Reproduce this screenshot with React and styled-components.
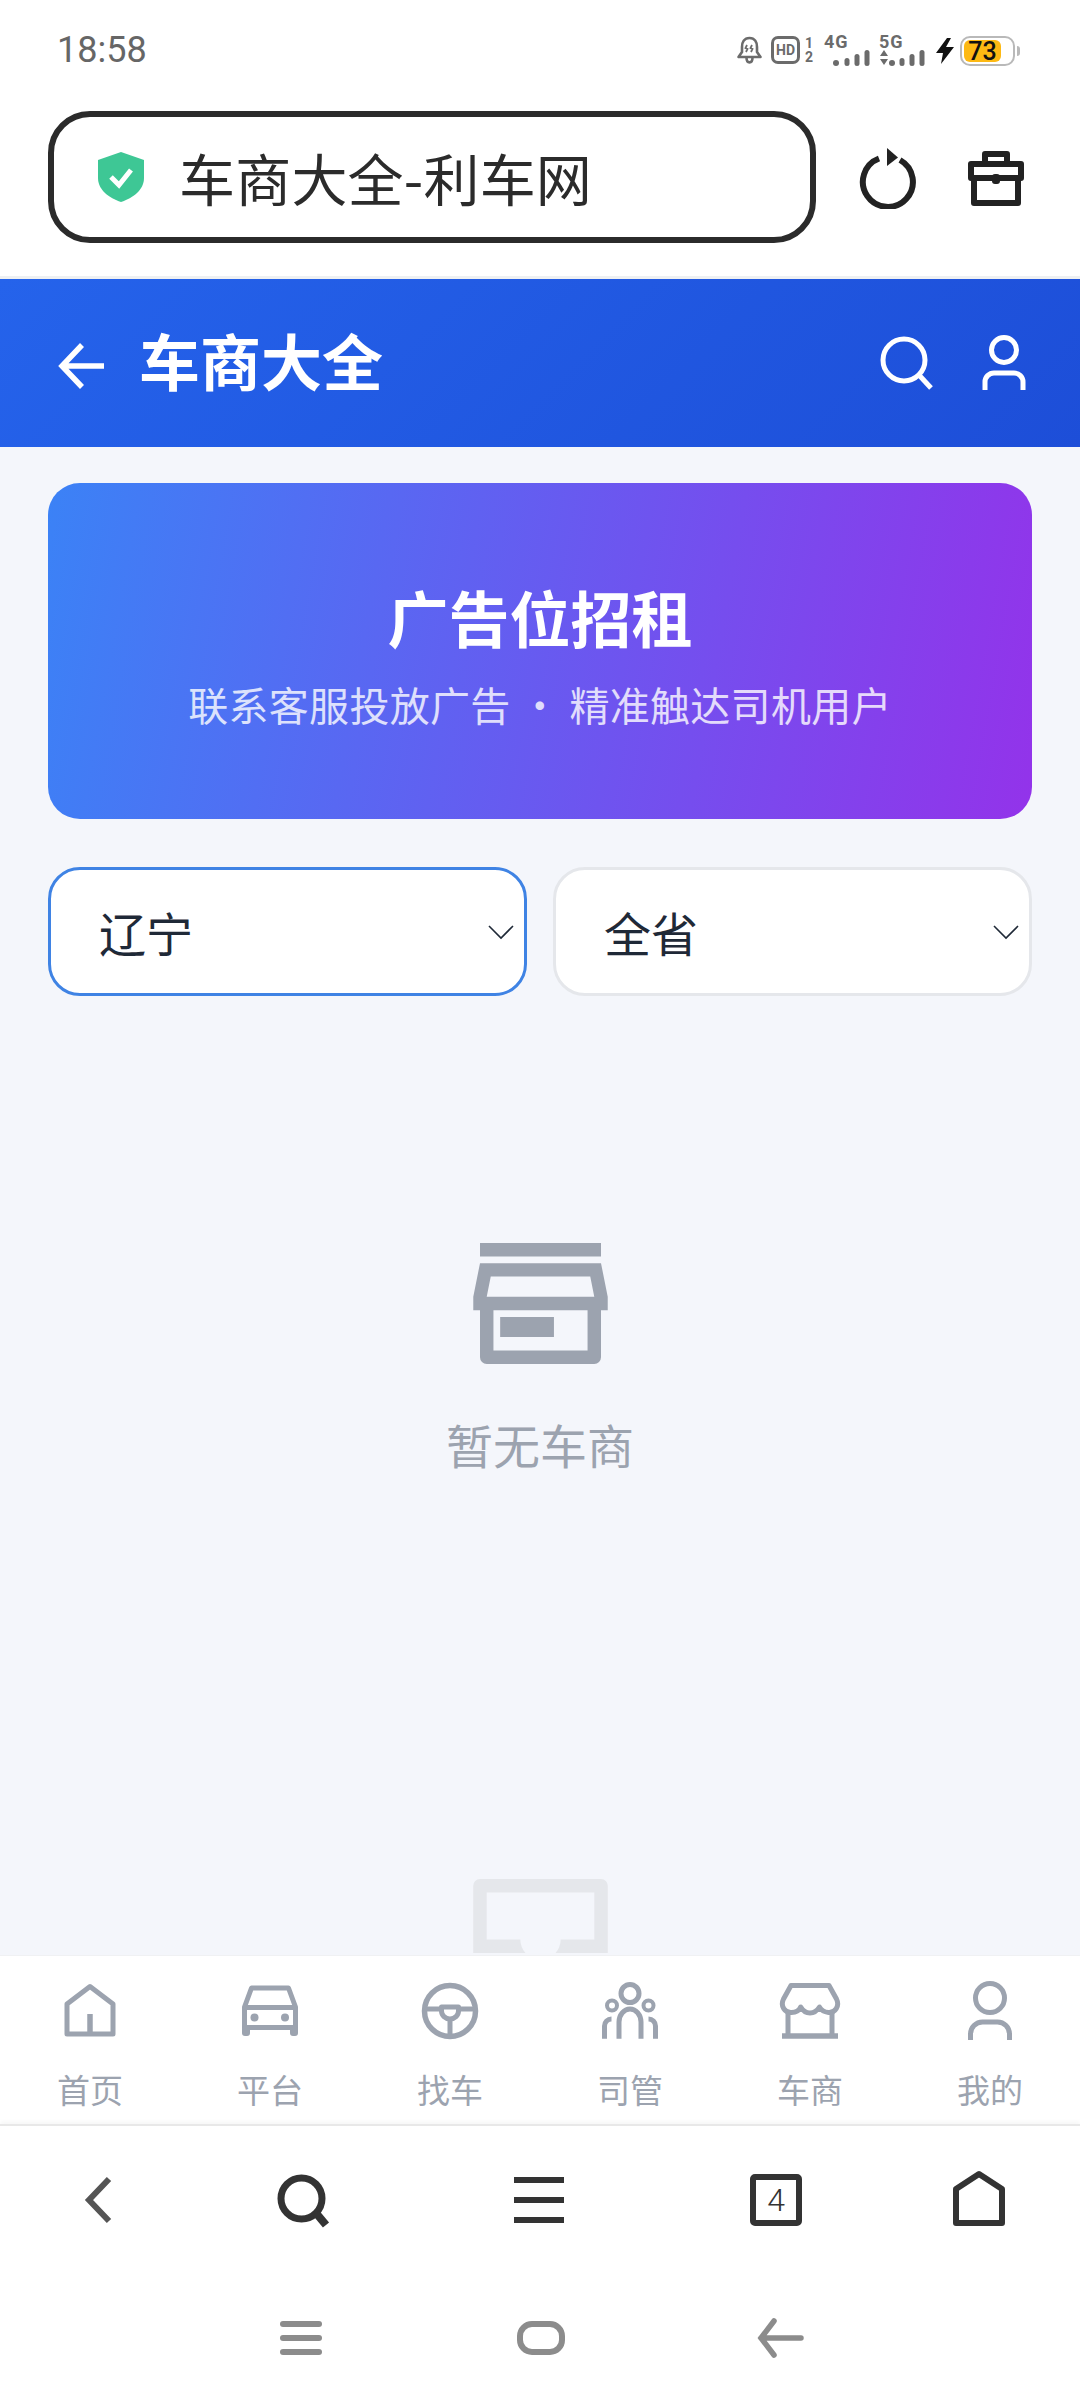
import React from 'react';
import styled, { createGlobalStyle } from 'styled-components';

const GlobalStyle = createGlobalStyle`
    html, body {
        margin: 0;
        padding: 0;
        background: #fff;
    }
    body {
        font-family: "Noto Sans CJK SC", "Noto Sans", sans-serif;
    }
`;

const Page = styled.div`
    width: 1080px;
    height: 2400px;
    display: flex;
    flex-direction: column;
    overflow: hidden;
    background: #fff;
`;

const StatusBar = styled.div`
    height: 72px;
    flex: none;
    display: flex;
    align-items: flex-start;
    justify-content: space-between;
    padding: 36px 65px 0 57px;
    box-sizing: border-box;
`;

const Time = styled.div`
    font-family: Roboto, sans-serif;
    font-size: 36px;
    line-height: 28px;
    color: #666;
`;

const StatusIcons = styled.div`
    display: flex;
    align-items: flex-start;
`;

const HdBadge = styled.div`
    width: 29px;
    height: 28px;
    margin-left: 8px;
    box-sizing: border-box;
    border: 3px solid #6b6b6b;
    border-radius: 7px;
    display: flex;
    align-items: center;
    justify-content: center;
    font-family: Roboto, sans-serif;
    font-size: 14px;
    font-weight: 700;
    color: #6b6b6b;
`;

const SimSlots = styled.div`
    width: 12px;
    margin-left: 3px;
    display: flex;
    flex-direction: column;
    align-items: center;
    font-family: Roboto, sans-serif;
    font-size: 14px;
    line-height: 14px;
    font-weight: 700;
    color: #6b6b6b;
`;

const Signal = styled.div`
    width: 46px;
    margin-left: ${p => p.$gap}px;
    position: relative;
    height: 31px;
`;

const SignalLabel = styled.span`
    position: absolute;
    left: 0;
    top: -2px;
    font-family: Roboto, sans-serif;
    font-size: 18px;
    line-height: 16px;
    font-weight: 700;
    letter-spacing: 1px;
    color: #6b6b6b;
`;

const SignalBars = styled.svg`
    position: absolute;
    left: 0;
    bottom: 0;
`;

const Bolt = styled.svg`
    flex: none;
    margin: 2px 0 0 10px;
`;

const Battery = styled.div`
    width: 55px;
    height: 30px;
    margin-left: 5px;
    box-sizing: border-box;
    border: 2px solid #b9b9b9;
    border-radius: 10px;
    padding: 2px 12px 2px 2px;
    position: relative;
`;

const BatteryLevel = styled.div`
    height: 100%;
    border-radius: 6px;
    background: #fdb913;
    display: flex;
    align-items: center;
    justify-content: center;
    font-family: Roboto, sans-serif;
    font-size: 25px;
    font-weight: 500;
    color: #111;
`;

const BatteryTip = styled.div`
    position: absolute;
    right: -7px;
    top: 8px;
    width: 3px;
    height: 10px;
    border-radius: 0 3px 3px 0;
    background: #b9b9b9;
`;

const BrowserBar = styled.div`
    height: 207px;
    flex: none;
    display: flex;
    align-items: flex-start;
    padding: 39px 0 0 48px;
    box-sizing: border-box;
    border-bottom: 3px solid #eef0f2;
`;

const AddressPill = styled.div`
    width: 768px;
    height: 132px;
    box-sizing: border-box;
    border: 6px solid #2b2b2b;
    border-radius: 42px;
    display: flex;
    align-items: center;
    padding-left: 43px;
    gap: 34px;
`;

const AddressText = styled.div`
    font-size: 56px;
    line-height: 70px;
    letter-spacing: 0.2px;
    color: #2b2b2b;
`;

const BrowserIcon = styled.svg`
    flex: none;
    margin: ${p => p.$top}px 0 0 ${p => p.$left}px;
`;

const Header = styled.div`
    height: 168px;
    flex: none;
    display: flex;
    align-items: center;
    padding: 0 54px 0 56px;
    box-sizing: border-box;
    background: linear-gradient(135deg, #2563eb, #1d4ed8);
`;

const HeaderTitle = styled.div`
    flex: 1;
    margin: 0 0 6px 33px;
    font-size: 61px;
    line-height: 70px;
    font-weight: 700;
    color: #fff;
`;

const HeaderBack = styled.svg`
    flex: none;
    margin-top: 6px;
`;

const HeaderIcon = styled.svg`
    flex: none;
    margin-left: ${p => p.$left || 0}px;
`;

const Content = styled.div`
    flex: 1;
    min-height: 0;
    padding: 36px 48px 0;
    box-sizing: border-box;
    background: #f4f6fb;
    display: flex;
    flex-direction: column;
    align-items: stretch;
    overflow: hidden;
`;

const Banner = styled.div`
    height: 336px;
    flex: none;
    border-radius: 32px;
    background: linear-gradient(100deg, #3b82f6, #9333ea);
    display: flex;
    flex-direction: column;
    align-items: center;
    justify-content: center;
    padding-top: 5px;
    box-sizing: border-box;
    color: #fff;
`;

const BannerTitle = styled.div`
    font-size: 61px;
    line-height: 84px;
    font-weight: 700;
`;

const BannerText = styled.div`
    margin-top: 17px;
    font-size: 40px;
    line-height: 56px;
    letter-spacing: 0.3px;
    opacity: 0.8;
    white-space: pre;
`;

const Filters = styled.div`
    margin-top: 48px;
    display: grid;
    grid-template-columns: 1fr 1fr;
    gap: 26px;
    flex: none;
`;

const Select = styled.div`
    height: 129px;
    box-sizing: border-box;
    border: 3px solid ${p => (p.$focused ? '#3f83e4' : '#e5e7eb')};
    border-radius: 32px;
    background: #fff;
    display: flex;
    align-items: center;
    justify-content: space-between;
    padding: 0 10px 0 48px;
    font-size: 47px;
    color: #1f2937;
`;

const Empty = styled.div`
    margin-top: 247px;
    display: flex;
    flex-direction: column;
    align-items: center;
    flex: none;
`;

const EmptyText = styled.div`
    margin-top: 46px;
    font-size: 47px;
    line-height: 68px;
    color: #9ca3af;
`;

const GhostIcon = styled.svg`
    flex: none;
    align-self: center;
    margin-top: 401px;
`;

const BottomNav = styled.div`
    height: 168px;
    flex: none;
    display: grid;
    grid-template-columns: repeat(6, 180px);
    background: #fff;
    box-shadow: 0 -1px 0 #f0f1f3;
`;

const Tab = styled.div`
    display: flex;
    flex-direction: column;
    align-items: center;
    padding-top: 24px;
`;

const TabIcon = styled.svg`
    fill: none;
    stroke: #9ca3af;
    stroke-width: 5;
`;

const TabLabel = styled.div`
    margin-top: 24px;
    font-size: 33px;
    line-height: 42px;
    color: #9ca3af;
`;

const Toolbar = styled.div`
    height: 156px;
    flex: none;
    display: grid;
    grid-template-columns: 198px 210px 262px 212px 194px;
    justify-items: center;
    align-items: start;
    padding-top: 43px;
    box-sizing: border-box;
    border-top: 2px solid #e8e8e8;
    background: #fff;
    box-shadow: 0 -3px 4px rgba(0, 0, 0, 0.03);
    position: relative;
`;

const ToolbarIcon = styled.svg`
    display: block;
`;

const TabCount = styled.div`
    width: 52px;
    height: 52px;
    margin-top: 5px;
    box-sizing: border-box;
    border: 6px solid #333;
    border-radius: 5px;
    display: flex;
    align-items: center;
    justify-content: center;
    font-family: Roboto, sans-serif;
    font-size: 32px;
    font-weight: 300;
    color: #333;
`;

const SystemNav = styled.div`
    height: 120px;
    flex: none;
    display: flex;
    justify-content: center;
    gap: 176px;
    padding: 26px 0 0 2px;
    box-sizing: border-box;
`;

const tabs = [
    {
        label: '首页',
        icon: (
            <>
                <path d="M32 6.5L55 24V54H9V24Z" strokeLinejoin="round" />
                <path d="M32 34V54" strokeWidth="5.5" />
            </>
        )
    },
    {
        label: '平台',
        icon: (
            <>
                <path d="M6.5 27L13.5 8H50.5L57.5 27V47.5H6.5Z" strokeLinejoin="round" />
                <path d="M6.5 27.5H57.5" />
                <circle cx="16.5" cy="37.5" r="4" fill="#9ca3af" stroke="none" />
                <circle cx="47" cy="37.5" r="4" fill="#9ca3af" stroke="none" />
                <rect x="4" y="46" width="8" height="10" rx="3" fill="#9ca3af" stroke="none" />
                <rect x="52" y="46" width="8" height="10" rx="3" fill="#9ca3af" stroke="none" />
            </>
        )
    },
    {
        label: '找车',
        icon: (
            <>
                <circle cx="32" cy="31" r="25.5" strokeWidth="5.5" />
                <path d="M23.5 27H40.5V31A8.5 8 0 0 1 23.5 31Z" strokeLinejoin="round" />
                <path d="M7 29H22M42 29H57M32 40V56" />
            </>
        )
    },
    {
        label: '司管',
        icon: (
            <>
                <circle cx="32" cy="13.5" r="9" />
                <circle cx="14" cy="25.5" r="5" strokeWidth="4" />
                <circle cx="50.5" cy="25.5" r="5" strokeWidth="4" />
                <path d="M21 58.7V42A11 13 0 0 1 43 42V58.7" />
                <path d="M6.5 58.7V46A7 7 0 0 1 13.5 39M57.5 58.7V46A7 7 0 0 0 50.5 39" />
            </>
        )
    },
    {
        label: '车商',
        icon: (
            <>
                <path
                    d="M13 5.5H51L58.5 19C62 26 57 33 50.5 32.5C46 32 43 30 41.5 27C39 31 35.5 33 32 33C28 33 25 31 22.7 27C21 31 17 32.5 13.5 32.5C7 33 2 26 5.5 19Z"
                    strokeLinejoin="round"
                />
                <path d="M10 32V56M54 32V56" />
                <path d="M4 56H60" strokeWidth="5.5" />
            </>
        )
    },
    {
        label: '我的',
        icon: (
            <>
                <circle cx="32" cy="18" r="14.5" />
                <path d="M12.5 60V54A12 12 0 0 1 24.5 42H39.5A12 12 0 0 1 51.5 54V60" />
            </>
        )
    }
];

export default function App() {
    return (
        <Page>
            <GlobalStyle />
            <StatusBar>
                <Time>18:58</Time>
                <StatusIcons>
                    <svg width="27" height="28" viewBox="0 0 27 28" fill="none" stroke="#6b6b6b" strokeWidth="2.6">
                        <path d="M13.5 2C8 2 6 6.5 6 11V16L2.5 21H24.5L21 16V11C21 6.5 19 2 13.5 2Z" strokeLinejoin="round" />
                        <path d="M10.5 21.5C10.5 28 16.5 28 16.5 21.5" />
                        <path d="M11 9L9.5 12L11.5 13L10 16M16 9L14.5 12L16.5 13L15 16" strokeWidth="1.8" />
                    </svg>
                    <HdBadge>HD</HdBadge>
                    <SimSlots>
                        <span>1</span>
                        <span>2</span>
                    </SimSlots>
                    <Signal $gap={9}>
                        <SignalLabel>4G</SignalLabel>
                        <SignalBars width="46" height="18" viewBox="0 0 46 18" fill="#6b6b6b">
                            <circle cx="12" cy="14" r="3" />
                            <rect x="20.5" y="9" width="5" height="8" rx="2.5" />
                            <rect x="30.5" y="5" width="5" height="12" rx="2.5" />
                            <rect x="40.5" y="1" width="5" height="16" rx="2.5" />
                        </SignalBars>
                    </Signal>
                    <Signal $gap={9}>
                        <SignalLabel>5G</SignalLabel>
                        <SignalBars width="46" height="18" viewBox="0 0 46 18" fill="#6b6b6b">
                            <path d="M1 7L5 1L9 7ZM1 10H9L5 16Z" />
                            <circle cx="13" cy="14" r="3" />
                            <rect x="20.5" y="9" width="5" height="8" rx="2.5" />
                            <rect x="30.5" y="5" width="5" height="12" rx="2.5" />
                            <rect x="40.5" y="1" width="5" height="16" rx="2.5" />
                        </SignalBars>
                    </Signal>
                    <Bolt width="20" height="26" viewBox="0 0 20 26" fill="#111">
                        <path d="M12 0L1 15H8L6 26L19 9H11L16 0Z" />
                    </Bolt>
                    <Battery>
                        <BatteryLevel>73</BatteryLevel>
                        <BatteryTip />
                    </Battery>
                </StatusIcons>
            </StatusBar>

            <BrowserBar>
                <AddressPill>
                    <svg width="48" height="50" viewBox="0 0 48 50">
                        <path d="M24 0L47 8V26C47 38 36 46 24 50C12 46 1 38 1 26V8Z" fill="#3ec795" />
                        <path d="M14 25L22 33L34 18" fill="none" stroke="#fff" strokeWidth="5" />
                    </svg>
                    <AddressText>车商大全-利车网</AddressText>
                </AddressPill>
                <BrowserIcon $left={43} $top={34} width="60" height="64" viewBox="0 0 60 64" fill="none" stroke="#222" strokeWidth="6">
                    <path d="M41 15A25 25 0 1 1 20 13.5" />
                    <path d="M28 3L39 12.5L28 21Z" fill="#222" stroke="none" />
                </BrowserIcon>
                <BrowserIcon $left={47} $top={37} width="60" height="60" viewBox="0 0 60 60" fill="none" stroke="#222" strokeWidth="6">
                    <path d="M5 16H55V30H5ZM8 30V55H52V30" strokeLinejoin="round" />
                    <path d="M19 16V6H41V16" strokeLinejoin="round" />
                    <rect x="26" y="26" width="8" height="10" rx="3" fill="#222" stroke="none" />
                </BrowserIcon>
            </BrowserBar>

            <Header>
                <HeaderBack width="50" height="46" viewBox="0 0 50 46" fill="none" stroke="#fff" strokeWidth="5.5">
                    <path d="M26 2L6 23L26 44M6 23H48" />
                </HeaderBack>
                <HeaderTitle>车商大全</HeaderTitle>
                <HeaderIcon width="54" height="54" viewBox="0 0 54 54" fill="none" stroke="#fff" strokeWidth="5">
                    <circle cx="24" cy="24" r="21" />
                    <path d="M39 39L51 52" />
                </HeaderIcon>
                <HeaderIcon $left={48} width="44" height="56" viewBox="0 0 44 56" fill="none" stroke="#fff" strokeWidth="5">
                    <circle cx="22" cy="15" r="12.5" />
                    <path d="M3 55V47A9 9 0 0 1 12 38H32A9 9 0 0 1 41 47V55" />
                </HeaderIcon>
            </Header>

            <Content>
                <Banner>
                    <BannerTitle>广告位招租</BannerTitle>
                    <BannerText>联系客服投放广告 · 精准触达司机用户</BannerText>
                </Banner>
                <Filters>
                    <Select $focused>
                        辽宁
                        <svg width="26" height="16" viewBox="0 0 26 16" fill="none" stroke="#1f2937" strokeWidth="1.6">
                            <path d="M1 2L13 14L25 2" />
                        </svg>
                    </Select>
                    <Select>
                        全省
                        <svg width="26" height="16" viewBox="0 0 26 16" fill="none" stroke="#1f2937" strokeWidth="1.6">
                            <path d="M1 2L13 14L25 2" />
                        </svg>
                    </Select>
                </Filters>
                <Empty>
                    <svg width="135" height="121" viewBox="0 0 20 18" fill="#9ca3af" fillRule="evenodd">
                        <path d="M1 0H19V2H1Z" />
                        <path d="M1 3H19L20 8V10H19V17A1 1 0 0 1 18 18H2A1 1 0 0 1 1 17V10H0V8ZM2.6 5H17.4L18 8H2ZM3 10H17V16H3ZM4 11V14H12V11Z" />
                    </svg>
                    <EmptyText>暂无车商</EmptyText>
                </Empty>
                <GhostIcon width="135" height="74" viewBox="0 0 20 11" fill="#e5e7eb" fillRule="evenodd">
                    <path d="M1 0H19A1 1 0 0 1 20 1V11H0V1A1 1 0 0 1 1 0ZM2 2V9H7A3 3 0 0 0 13 9H18V2Z" />
                </GhostIcon>
            </Content>

            <BottomNav>
                {tabs.map(tab => (
                    <Tab key={tab.label}>
                        <TabIcon width="64" height="64" viewBox="0 0 64 64">{tab.icon}</TabIcon>
                        <TabLabel>{tab.label}</TabLabel>
                    </Tab>
                ))}
            </BottomNav>

            <Toolbar>
                <ToolbarIcon width="60" height="60" viewBox="0 0 60 60" fill="none" stroke="#555" strokeWidth="6">
                    <path d="M40 10L20 31L40 52" />
                </ToolbarIcon>
                <ToolbarIcon width="60" height="60" viewBox="0 0 60 60" fill="none" stroke="#333" strokeWidth="7">
                    <circle cx="28.5" cy="29.5" r="20.5" />
                    <path d="M43 44L53 56" strokeWidth="8" />
                </ToolbarIcon>
                <ToolbarIcon width="60" height="60" viewBox="0 0 60 60" fill="#333">
                    <rect x="5" y="8" width="50" height="6" />
                    <rect x="5" y="28" width="50" height="6" />
                    <rect x="5" y="48" width="50" height="6" />
                </ToolbarIcon>
                <TabCount>4</TabCount>
                <ToolbarIcon width="60" height="60" viewBox="0 0 60 60" fill="none" stroke="#333" strokeWidth="6">
                    <path d="M30 5L53 20V54H7V20Z" strokeLinejoin="round" />
                </ToolbarIcon>
            </Toolbar>

            <SystemNav>
                <svg width="64" height="64" viewBox="0 0 64 64" fill="#8c8c8c">
                    <rect x="11" y="15" width="42" height="6" rx="3" />
                    <rect x="11" y="29" width="42" height="6" rx="3" />
                    <rect x="11" y="43" width="42" height="6" rx="3" />
                </svg>
                <svg width="64" height="64" viewBox="0 0 64 64" fill="none" stroke="#8c8c8c" strokeWidth="6">
                    <rect x="11" y="18" width="42" height="28" rx="12" />
                </svg>
                <svg width="64" height="64" viewBox="0 0 64 64" fill="none" stroke="#8c8c8c" strokeWidth="5.5" strokeLinecap="round">
                    <path d="M25 15L12 32L25 49M12 32H52" />
                </svg>
            </SystemNav>
        </Page>
    );
}
